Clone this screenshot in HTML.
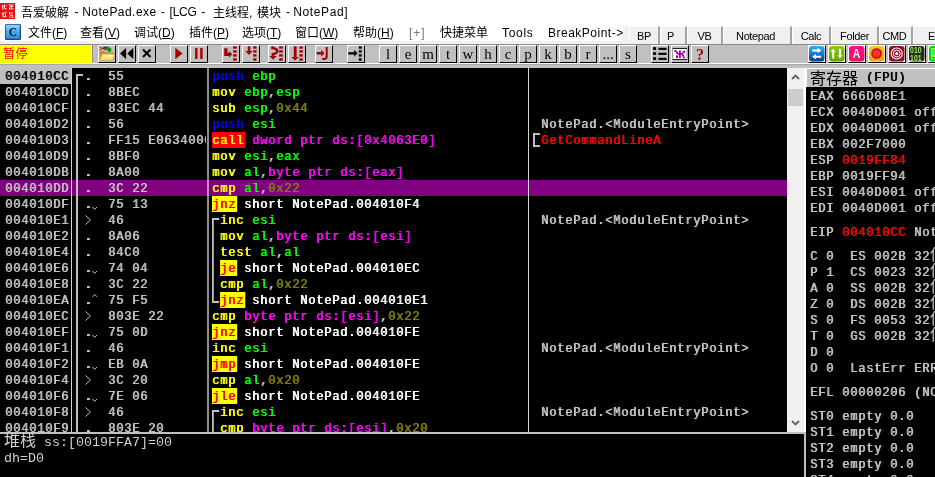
<!DOCTYPE html>
<html lang="zh-CN">
<head>
<meta charset="utf-8">
<title>吾爱破解 - NotePad.exe</title>
<style>
html,body{margin:0;padding:0}
body{width:935px;height:477px;overflow:hidden;background:#fff;position:relative;
 font-family:"Liberation Sans","Noto Sans CJK SC",sans-serif;font-size:12px;color:#000}
div,span,i,b,u{box-sizing:border-box}
i,b,u{font-style:normal;font-weight:inherit;text-decoration:none}
.abs{position:absolute}
#wrap{position:absolute;left:0;top:0;width:935px;height:477px;will-change:transform}
/* title */
#title{position:absolute;left:0;top:0;width:935px;height:22px;background:#fff}
#title span{position:absolute;top:4px;height:17px;line-height:17px;font-size:12px;white-space:pre}
#ticon{position:absolute;left:0;top:3px;width:15px;height:16px}
/* menu */
#menu{position:absolute;left:0;top:22px;width:935px;height:22px;background:#fff}
#menu span{position:absolute;top:3px;height:17px;line-height:17px;font-size:12px;white-space:nowrap}
#menu span u{text-decoration:underline}
#menu .gr{color:#777}
#micon{position:absolute;left:5px;top:2px;width:16px;height:16px}
.tb{position:absolute;top:4px;height:19px;background:#f0f0f0;border-left:1px solid #fff;border-top:1px solid #fff;border-right:2px solid #a4a4a4;border-bottom:1px solid #b8b8b8;
 font-size:11px;line-height:19px;text-align:center;white-space:nowrap;overflow:hidden;letter-spacing:-.4px}
/* toolbar */
#tool{position:absolute;left:0;top:44px;width:935px;height:24px;background:#c0c0c0}
#tool .hl{position:absolute;left:0;top:0;width:935px;height:1px;background:#8a8a8a}
#tool .wl{position:absolute;left:0;top:19px;width:935px;height:1px;background:#fff}
#tool .gl{position:absolute;left:0;top:20px;width:935px;height:1px;background:#a8a8a8}
#tool .sv{position:absolute;left:91px;top:1px;width:1px;height:18px;background:#fff}
#tool .sd{position:absolute;left:92px;top:1px;width:1px;height:18px;background:#909090}
#mstrip{position:absolute;left:0;top:19px;width:935px;height:3px;background:#f0f0f0}
#st{position:absolute;left:0;top:1px;width:91px;height:18px;background:#ffff00;color:#ff0000;font-size:12px;line-height:21px;padding-left:3px;letter-spacing:.6px;overflow:hidden;
 font-family:"Liberation Mono","Noto Sans CJK SC",monospace}
.bt{position:absolute;top:1px;width:18px;height:18px;background:#c0c0c0;border-left:1px solid #fff;border-top:1px solid #fff;border-right:1px solid #000;border-bottom:1px solid #000;
 font-family:"Liberation Serif",serif;font-size:15px;line-height:16px;text-align:center;color:#000}
.bt svg{position:absolute;left:0;top:0;width:16px;height:16px}
.ic{position:absolute;top:1px;width:18px;height:18px;background:#fff;border-left:1px solid #fff;border-top:1px solid #fff;border-right:1px solid #000;border-bottom:1px solid #000}
.ic svg{position:absolute;left:0;top:0;width:16px;height:16px}
/* cpu pane */
#cpu{position:absolute;left:0;top:68px;width:787px;height:364px;background:#000;overflow:hidden;
 font-family:"Liberation Mono",monospace;font-weight:normal;text-shadow:.85px 0 0 currentColor;font-size:13.33px;color:#c0c0c0}
.row{position:absolute;left:0;width:787px;height:16px;line-height:16px;white-space:pre}
.row.sel{background:#800080}
.row span{position:absolute;top:0;height:16px;line-height:18px;white-space:pre;overflow:hidden;transform:scaleX(0.9);transform-origin:0 0;letter-spacing:0.889px}
.ad{left:0;width:78.89px;padding-left:5.50px}
.ad.cur{background:#c0c0c0;color:#000}
.mk{left:84px;width:9px;transform:scaleX(1.300) !important;transform-origin:4.400px 0 !important;letter-spacing:0 !important}
.hx{left:108.200px;width:109.11px}
.ds{left:212px;width:351.11px;color:#fff}
.cm{left:541.300px;width:272.22px}
.jv,.ju{position:absolute;left:91px;top:0;width:8px;height:16px}
.gt{position:absolute;left:84px;top:0;width:8px;height:16px}
.l1,.l2,.l3{display:inline-block;position:relative;width:8.889px;height:16px;vertical-align:top;letter-spacing:0}
.l1:before{content:"";position:absolute;left:0;top:6px;width:2.200px;height:10px;background:#c0c0c0}
.l1:after{content:"";position:absolute;left:0;top:6px;width:7.800px;height:2px;background:#c0c0c0}
.l2:before{content:"";position:absolute;left:0;top:0;width:2.200px;height:16px;background:#c0c0c0}
.l3:before{content:"";position:absolute;left:0;top:0;width:2.200px;height:11px;background:#c0c0c0}
.l3:after{content:"";position:absolute;left:0;top:9px;width:7.800px;height:2px;background:#c0c0c0}
.cb{position:absolute;left:533px;top:1px;width:7px;height:14px;border:2px solid #c0c0c0;border-right:none}
b.b{color:#0000ff} b.y{color:#ffff00} b.g{color:#00ff00} b.o{color:#808000} b.m{color:#ff00ff} b.w{color:#c0c0c0} b.W{color:#fff}
b.r,.r{color:#ff0000}
b.call{color:#ffff00;background:#ff0000}
b.j{color:#ff0000;background:#ffff00}
b.call,b.j{display:inline-block;height:16px;line-height:18px;vertical-align:top;padding-right:1px;margin-right:-1px}
.vl{position:absolute;top:0;height:364px;background:#c0c0c0}
/* scrollbar */
#sb{position:absolute;left:787px;top:68px;width:17px;height:364px;background:#f0f0f0}
#sb .th{position:absolute;left:1px;top:21px;width:15px;height:17px;background:#cdcdcd}
#sb svg{position:absolute;left:4px;width:9px;height:6px}
/* info */
#info{position:absolute;left:0;top:432px;width:806px;height:45px;background:#000;border-top:2px solid #c0c0c0;border-right:2px solid #c0c0c0;
 font-family:"Liberation Mono","Noto Sans CJK SC",monospace;font-size:13.33px;color:#d0d0d0}
#info div{position:absolute;left:4px;height:16px;line-height:16px;white-space:pre}
#info .cj{font-size:16px;letter-spacing:0}
/* regs */
#reg{position:absolute;left:806px;top:68px;width:129px;height:409px;background:#000;overflow:hidden;
 font-family:"Liberation Mono","Noto Sans CJK SC",monospace;font-weight:normal;text-shadow:.85px 0 0 currentColor;font-size:13.33px;color:#c0c0c0}
#reg .hd{position:absolute;left:0;top:0;width:129px;height:19px;background:#c0c0c0;color:#000;line-height:22px;padding-left:3px;white-space:pre;border-left:1px solid #fff;border-top:1px solid #fff;overflow:hidden}
#reg .hd .cj{font-size:16px;font-weight:normal;text-shadow:none}
#reg .hd span{position:absolute;top:0;white-space:pre}
#reg .hd .hc{left:3px;line-height:22px}
#reg .hd .hf{left:59.300px;line-height:18px;transform:scaleX(0.9);transform-origin:0 0;letter-spacing:0.889px}
.rg{position:absolute;left:4.300px;width:138.89px;height:18px;line-height:20px;white-space:pre;overflow:hidden;transform:scaleX(0.9);transform-origin:0 0;letter-spacing:0.889px}
.rg .cj{text-shadow:none;font-weight:normal;font-size:16px;position:absolute;left:133.00px;top:-1px;line-height:20px;letter-spacing:0;transform:scaleX(1.1111);transform-origin:0 0}
</style>
</head>
<body>
<div id="wrap">
<div id="title">
<svg id="ticon" viewBox="0 0 15 16"><rect width="15" height="16" fill="#e61212"/><g fill="#ffd8d8"><rect x="2" y="2" width="1" height="3"/><rect x="3" y="3" width="2" height="1"/><rect x="4" y="1.500" width="1" height="4"/><rect x="5.500" y="2" width="1" height="1"/><rect x="2" y="5.500" width="2" height="1"/><rect x="5" y="5" width="1.500" height="1.500"/><rect x="8.500" y="1.500" width="5" height="1"/><rect x="10" y="3" width="3" height="1"/><rect x="11" y="2.500" width="1" height="4"/><rect x="9" y="4.500" width="1.500" height="2"/><rect x="12.500" y="5" width="1" height="1.500"/><rect x="2.500" y="9" width="1" height="5.500"/><rect x="1.500" y="10.500" width="3" height="1"/><rect x="4.500" y="9" width="2" height="1"/><rect x="5" y="10.500" width="1" height="4"/><rect x="3.500" y="13" width="3" height="1"/><rect x="9" y="9" width="1" height="2"/><rect x="10.500" y="9.500" width="2.500" height="1"/><rect x="9.500" y="11.500" width="2" height="1"/><rect x="11" y="12" width="2" height="1"/><rect x="9" y="13.500" width="1.500" height="1"/><rect x="11.500" y="13.500" width="2" height="1.500"/></g></svg>
<span style="left:21px;top:5px">吾爱破解</span><span style="left:74.500px">-</span><span style="left:82.200px;letter-spacing:.46px">NotePad.exe</span><span style="left:161px">-</span><span style="left:169.500px;letter-spacing:-.2px">[LCG</span><span style="left:201.300px">-</span><span style="left:213px;top:5px">主线程,</span><span style="left:257px;top:5px">模块</span><span style="left:286px">-</span><span style="left:293.300px;letter-spacing:.6px">NotePad]</span>
</div>
<div id="menu">
<div id="mstrip"></div>
<svg id="micon" viewBox="0 0 16 16"><defs><linearGradient id="mg" x1="0" y1="0" x2="0" y2="1"><stop offset="0" stop-color="#9ad8f8"/><stop offset=".5" stop-color="#4aa8e8"/><stop offset="1" stop-color="#2a8cdc"/></linearGradient></defs><rect x="0" y="0" width="16" height="16" rx="1.500" fill="#0c4a8a"/><rect x=".8" y=".8" width="14" height="14" rx="1" fill="url(#mg)"/><text x="7.800" y="11.800" font-family="Liberation Serif,serif" font-weight="bold" font-size="11.500" text-anchor="middle" fill="#0a1a30">C</text></svg>
<span style="left:28px">文件(<u>F</u>)</span>
<span style="left:80px">查看(<u>V</u>)</span>
<span style="left:134px">调试(<u>D</u>)</span>
<span style="left:189px">插件(<u>P</u>)</span>
<span style="left:242px">选项(<u>T</u>)</span>
<span style="left:295px">窗口(<u>W</u>)</span>
<span style="left:353px">帮助(<u>H</u>)</span>
<span style="left:409px;letter-spacing:.9px" class="gr">[+]</span>
<span style="left:440px">快捷菜单</span>
<span style="left:502px;letter-spacing:.7px">Tools</span>
<span style="left:548px;letter-spacing:.5px">BreakPoint-&gt;</span>
<div class="abs" style="left:623px;top:4px;width:312px;height:18px;background:#f0f0f0"></div>
<div class="tb" style="left:629px;width:31px">BP</div>
<div class="tb" style="left:660px;width:27px;padding-right:5px">P</div>
<div class="tb" style="left:687px;width:36px">VB</div>
<div class="tb" style="left:723px;width:69px;padding-right:3px">Notepad</div>
<div class="tb" style="left:792px;width:39px">Calc</div>
<div class="tb" style="left:831px;width:48px">Folder</div>
<div class="tb" style="left:879px;width:34px;padding-right:2px">CMD</div>
<div class="tb" style="left:913px;width:60px;text-align:left;padding-left:14px">ESP</div>
</div>
<div id="tool">
<div class="hl"></div><div class="wl"></div><div class="gl"></div><div class="sv"></div><div class="sd"></div>
<div id="st">暂停</div>
<div class="bt" style="left:98px"><svg viewBox="0 0 16 16"><path d="M0.500 5h5l1 1.500h8.500v7.500h-14.500z" fill="#c89020"/><path d="M3 8h12.800l-1.800 6.300h-13.500z" fill="#ffe070" stroke="#d0a030" stroke-width=".8"/><path d="M4 8.800h10.500l-.5 2h-10.500z" fill="#fff4b0"/><path d="M3.500 1c2.500-1.500 7-1 8.700 1.800v3h-3.200l-.8-1.800h-3.500z" fill="#109018"/><rect x="5.500" y="1.200" width="1" height="1" fill="#000"/><path d="M0.300 0.800l3 1.700l-3 1.700M3 2.500h2.500" stroke="#f00000" stroke-width="1" fill="none"/></svg></div>
<div class="bt" style="left:118px"><svg viewBox="0 0 16 16"><path d="M7.100 2v11L1 7.500zM14.300 2v11L8.300 7.500z" fill="#000"/></svg></div>
<div class="bt" style="left:138px"><svg viewBox="0 0 16 16"><path d="M4 3.500l7.500 7.500M11.500 3.500l-7.500 7.500" stroke="#000" stroke-width="2"/></svg></div>
<div class="bt" style="left:170px"><svg viewBox="0 0 16 16"><path d="M4.300 1.800v11.500l7.200-5.750z" fill="#a80000"/></svg></div>
<div class="bt" style="left:190px"><svg viewBox="0 0 16 16"><rect x="4.100" y="2" width="2.400" height="11" fill="#a80000"/><rect x="9.200" y="2" width="2.400" height="11" fill="#a80000"/></svg></div>
<div class="bt" style="left:222px"><svg viewBox="0 0 16 16"><path d="M1.200 2.200h3.300v4.600h1.500v-1.800l3.200 3.300l-3.200 3.400v-1.800h-4.800z" fill="#a80000"/><rect x="10.1" y="0.3" width="3.6" height="2.400" fill="#a80000"/><rect x="10.1" y="4.2" width="3.6" height="2.400" fill="#a80000"/><rect x="10.1" y="8.2" width="3.6" height="2.400" fill="#a80000"/><rect x="10.1" y="12.3" width="3.6" height="2.400" fill="#a80000"/></svg></div>
<div class="bt" style="left:242px"><svg viewBox="0 0 16 16"><path d="M4.800 0.200h2.500v4.800h2.300l-3.600 3.900l-3.700-3.900h2.500z" fill="#a80000"/><rect x="10.2" y="0.3" width="3.3" height="2.400" fill="#a80000"/><rect x="10.2" y="4.2" width="3.3" height="2.400" fill="#a80000"/><rect x="10.2" y="8.2" width="3.3" height="2.400" fill="#a80000"/><rect x="10.2" y="12.3" width="3.3" height="2.400" fill="#a80000"/></svg></div>
<div class="bt" style="left:268px"><svg viewBox="0 0 16 16"><path d="M3.500 0.300v1.700q4.800 0.800 4.800 3.200q0 2-4.500 3v2" stroke="#a80000" stroke-width="2.500" fill="none"/><path d="M0.400 9.900h7.400l-3.700 3.900z" fill="#a80000"/><rect x="10.1" y="0.3" width="3.7" height="2.400" fill="#a80000"/><rect x="10.1" y="4.2" width="3.7" height="2.400" fill="#a80000"/><rect x="10.1" y="8.2" width="3.7" height="2.400" fill="#a80000"/><rect x="10.1" y="12.3" width="3.7" height="2.400" fill="#a80000"/></svg></div>
<div class="bt" style="left:288px"><svg viewBox="0 0 16 16"><path d="M4.800 0.200h2.800v10.700h2.300l-3.800 3.700l-3.900-3.700h2.600z" fill="#a80000"/><rect x="10.4" y="0.3" width="3.4" height="2.400" fill="#a80000"/><rect x="10.4" y="4.2" width="3.4" height="2.400" fill="#a80000"/><rect x="10.4" y="8.2" width="3.4" height="2.400" fill="#a80000"/><rect x="10.4" y="12.3" width="3.4" height="2.400" fill="#a80000"/></svg></div>
<div class="bt" style="left:315px"><svg viewBox="0 0 16 16"><path d="M0.700 5.900h4.500v-2.200l3.300 3.500l-3.300 3.600v-2.300h-4.500z" fill="#a80000"/><path d="M10.700 1.100v9.500q0 2.400-2.500 2.400h-2" stroke="#a80000" stroke-width="2" fill="none"/></svg></div>
<div class="bt" style="left:347px"><svg viewBox="0 0 16 16"><path d="M0.200 6.200h6v-2.500l3.400 3.600l-3.400 3.500v-2.400h-6z" fill="#000"/><rect x="10.8" y="0.3" width="2.9" height="2.400" fill="#000"/><rect x="10.8" y="4.2" width="2.9" height="2.400" fill="#000"/><rect x="10.8" y="8.2" width="2.9" height="2.400" fill="#000"/><rect x="10.8" y="12.3" width="2.9" height="2.400" fill="#000"/></svg></div>
<div class="bt" style="left:379px">l</div>
<div class="bt" style="left:399px">e</div>
<div class="bt" style="left:419px">m</div>
<div class="bt" style="left:439px">t</div>
<div class="bt" style="left:459px">w</div>
<div class="bt" style="left:479px">h</div>
<div class="bt" style="left:499px">c</div>
<div class="bt" style="left:519px">p</div>
<div class="bt" style="left:539px">k</div>
<div class="bt" style="left:559px">b</div>
<div class="bt" style="left:579px">r</div>
<div class="bt" style="left:599px">...</div>
<div class="bt" style="left:619px">s</div>
<div class="bt" style="left:651px"><svg viewBox="0 0 16 16"><g fill="#000"><rect x="1.100" y="1.200" width="3" height="2.700"/><rect x="6.400" y="1.800" width="8.200" height="2.100"/><rect x="1.100" y="6.200" width="3" height="2.700"/><rect x="6.400" y="6.800" width="8.200" height="2.100"/><rect x="1.100" y="11.200" width="3" height="2.700"/><rect x="6.400" y="11.800" width="8.200" height="2.100"/></g></svg></div>
<div class="bt" style="left:671px"><svg viewBox="0 0 16 16"><rect x=".7" y="2.300" width="14.300" height="11.400" fill="#fff" stroke="#909090" stroke-width=".8"/><rect x=".7" y="2" width="14.300" height="1" fill="#202020"/><rect x=".7" y="13" width="14.300" height="1" fill="#202020"/><g fill="#a000a0"><rect x="2.500" y="4" width="2" height="2"/><rect x="4" y="5.500" width="2" height="2"/><rect x="5.500" y="7" width="6" height="1.800"/><rect x="7" y="4.500" width="1.800" height="7.500"/><rect x="10.500" y="5" width="2.500" height="1.800"/><rect x="4" y="9.500" width="2" height="2.500"/><rect x="10" y="9" width="2" height="1.500"/><rect x="11" y="10.500" width="2" height="1.800"/></g></svg></div>
<div class="bt" style="left:691px;font-family:'Liberation Serif',serif;font-weight:bold;color:#b00000;font-size:16px;line-height:17px">?</div>
<div class="ic" style="left:808px"><svg viewBox="0 0 16 16"><defs><linearGradient id="g1" x1="0" y1="0" x2="0" y2="1"><stop offset="0" stop-color="#28b4f4"/><stop offset=".5" stop-color="#1878d0"/><stop offset="1" stop-color="#0a3c8c"/></linearGradient></defs><rect x="0" y="0" width="15.500" height="15.500" rx="3" fill="url(#g1)"/><path d="M3.200 3.400h5.300v-1.600l3.900 2.600l-3.900 2.600v-1.500h-5.300zM12.200 9.700h-5.300v-1.600l-3.900 2.600l3.900 2.600v-1.500h5.300z" fill="#fff"/></svg></div>
<div class="ic" style="left:828px"><svg viewBox="0 0 16 16"><defs><linearGradient id="g2" x1="0" y1="0" x2="0" y2="1"><stop offset="0" stop-color="#8cc810"/><stop offset="1" stop-color="#5ea800"/></linearGradient></defs><rect x="0" y="0" width="15.500" height="15.500" rx="3" fill="url(#g2)"/><path d="M4.200 2.600l2.500 3.400h-1.500v6.400h-2v-6.400h-1.500zM11 12.600l-2.600-3.400h1.600v-6.400h2v6.400h1.600z" fill="#fff"/></svg></div>
<div class="ic" style="left:848px"><svg viewBox="0 0 16 16"><defs><linearGradient id="g3" x1="0" y1="0" x2="0" y2="1"><stop offset="0" stop-color="#ff1088"/><stop offset="1" stop-color="#f01060"/></linearGradient></defs><rect x="0" y="0" width="15.500" height="15.500" rx="3" fill="url(#g3)"/><text x="7.400" y="12.300" font-family="Liberation Sans,sans-serif" font-weight="bold" font-size="12.500" text-anchor="middle" fill="#fff" transform="translate(7.400 0) scale(.82 1) translate(-7.400 0)">A</text></svg></div>
<div class="ic" style="left:868px"><svg viewBox="0 0 16 16"><defs><linearGradient id="g4" x1="0" y1="0" x2="0" y2="1"><stop offset="0" stop-color="#f8c828"/><stop offset="1" stop-color="#f0a010"/></linearGradient></defs><rect x="0" y="0" width="15.500" height="15.500" rx="3" fill="url(#g4)"/><circle cx="7.600" cy="7.500" r="5.600" fill="#d04020"/><circle cx="7.600" cy="7.500" r="4.800" fill="#b01818"/><circle cx="7.600" cy="7.500" r="3.600" fill="#ff3030"/></svg></div>
<div class="ic" style="left:888px"><svg viewBox="0 0 16 16"><rect x="0" y="0" width="15.500" height="15.500" rx="3" fill="#941028"/><circle cx="7.700" cy="7.500" r="5.500" fill="none" stroke="#fff" stroke-width="1.100"/><circle cx="7.700" cy="7.500" r="3.400" fill="none" stroke="#fff" stroke-width="1"/><circle cx="7.700" cy="7.500" r="1.500" fill="#fff"/></svg></div>
<div class="ic" style="left:908px"><svg viewBox="0 0 16 16"><rect x="0" y="0" width="15.500" height="15.500" rx="3" fill="#2a2a2c"/><g transform="scale(.8 1)"><text x="1.400" y="7" font-family="Liberation Sans,sans-serif" font-weight="bold" font-size="8.600" fill="#98e848">010</text><text x="1.400" y="15" font-family="Liberation Sans,sans-serif" font-weight="bold" font-size="8.600" fill="#98e848">101</text></g></svg></div>
<div class="ic" style="left:928px"><svg viewBox="0 0 16 16"><rect x="0" y="0" width="15.500" height="15.500" rx="3" fill="#08d008"/><rect x="2.500" y="2.500" width="11" height="7" fill="#40f040" stroke="#a0ff40" stroke-width="1"/><rect x="2.500" y="10.500" width="11" height="2.500" fill="none" stroke="#a0ff40" stroke-width="1"/></svg></div>
</div>
<div id="cpu">
<div class="row" style="top:0px">
<span class="ad cur">004010CC</span>
<span class="mk">.</span>
<span class="hx">55</span>
<span class="ds"><b class="b">push</b> <b class="g">ebp</b></span>
</div>
<div class="row" style="top:16px">
<span class="ad">004010CD</span>
<span class="mk">.</span>
<span class="hx">8BEC</span>
<span class="ds"><b class="y">mov</b> <b class="g">ebp</b><b class="w">,</b><b class="g">esp</b></span>
</div>
<div class="row" style="top:32px">
<span class="ad">004010CF</span>
<span class="mk">.</span>
<span class="hx">83EC 44</span>
<span class="ds"><b class="y">sub</b> <b class="g">esp</b><b class="w">,</b><b class="o">0x44</b></span>
</div>
<div class="row" style="top:48px">
<span class="ad">004010D2</span>
<span class="mk">.</span>
<span class="hx">56</span>
<span class="ds"><b class="b">push</b> <b class="g">esi</b></span>
<span class="cm">NotePad.&lt;ModuleEntryPoint&gt;</span>
</div>
<div class="row" style="top:64px">
<span class="ad">004010D3</span>
<span class="mk">.</span>
<span class="hx">FF15 E0634000</span>
<span class="ds"><b class="call">call</b> <b class="m">dword ptr ds:[0x4063E0]</b></span>
<i class="cb"></i><span class="cm r">GetCommandLineA</span>
</div>
<div class="row" style="top:80px">
<span class="ad">004010D9</span>
<span class="mk">.</span>
<span class="hx">8BF0</span>
<span class="ds"><b class="y">mov</b> <b class="g">esi</b><b class="w">,</b><b class="g">eax</b></span>
</div>
<div class="row" style="top:96px">
<span class="ad">004010DB</span>
<span class="mk">.</span>
<span class="hx">8A00</span>
<span class="ds"><b class="y">mov</b> <b class="g">al</b><b class="w">,</b><b class="m">byte ptr ds:[eax]</b></span>
</div>
<div class="row sel" style="top:112px">
<span class="ad">004010DD</span>
<span class="mk">.</span>
<span class="hx">3C 22</span>
<span class="ds"><b class="y">cmp</b> <b class="g">al</b><b class="w">,</b><b class="o">0x22</b></span>
</div>
<div class="row" style="top:128px">
<span class="ad">004010DF</span>
<span class="mk">.</span>
<svg class="jv" viewBox="0 0 8 16"><path d="M1.500 11L3.700 13.300L6 11" stroke="#c0c0c0" stroke-width="1" fill="none"/></svg>
<span class="hx">75 13</span>
<span class="ds"><b class="j">jnz</b> <b class="W">short NotePad.004010F4</b></span>
</div>
<div class="row" style="top:144px">
<span class="ad">004010E1</span>
<svg class="gt" viewBox="0 0 8 16"><path d="M1.500 3.500L6.500 8L1.500 12.500" stroke="#c0c0c0" stroke-width="1" fill="none"/></svg>
<span class="hx">46</span>
<span class="ds"><i class="l1"></i><b class="y">inc</b> <b class="g">esi</b></span>
<span class="cm">NotePad.&lt;ModuleEntryPoint&gt;</span>
</div>
<div class="row" style="top:160px">
<span class="ad">004010E2</span>
<span class="mk">.</span>
<span class="hx">8A06</span>
<span class="ds"><i class="l2"></i><b class="y">mov</b> <b class="g">al</b><b class="w">,</b><b class="m">byte ptr ds:[esi]</b></span>
</div>
<div class="row" style="top:176px">
<span class="ad">004010E4</span>
<span class="mk">.</span>
<span class="hx">84C0</span>
<span class="ds"><i class="l2"></i><b class="y">test</b> <b class="g">al</b><b class="w">,</b><b class="g">al</b></span>
</div>
<div class="row" style="top:192px">
<span class="ad">004010E6</span>
<span class="mk">.</span>
<svg class="jv" viewBox="0 0 8 16"><path d="M1.500 11L3.700 13.300L6 11" stroke="#c0c0c0" stroke-width="1" fill="none"/></svg>
<span class="hx">74 04</span>
<span class="ds"><i class="l2"></i><b class="j">je</b> <b class="W">short NotePad.004010EC</b></span>
</div>
<div class="row" style="top:208px">
<span class="ad">004010E8</span>
<span class="mk">.</span>
<span class="hx">3C 22</span>
<span class="ds"><i class="l2"></i><b class="y">cmp</b> <b class="g">al</b><b class="w">,</b><b class="o">0x22</b></span>
</div>
<div class="row" style="top:224px">
<span class="ad">004010EA</span>
<span class="mk">.</span>
<svg class="ju" viewBox="0 0 8 16"><path d="M1.500 4.800L3.700 2.400L6 4.800" stroke="#c0c0c0" stroke-width="1" fill="none"/></svg>
<span class="hx">75 F5</span>
<span class="ds"><i class="l3"></i><b class="j">jnz</b> <b class="W">short NotePad.004010E1</b></span>
</div>
<div class="row" style="top:240px">
<span class="ad">004010EC</span>
<svg class="gt" viewBox="0 0 8 16"><path d="M1.500 3.500L6.500 8L1.500 12.500" stroke="#c0c0c0" stroke-width="1" fill="none"/></svg>
<span class="hx">803E 22</span>
<span class="ds"><b class="y">cmp</b> <b class="m">byte ptr ds:[esi]</b><b class="w">,</b><b class="o">0x22</b></span>
</div>
<div class="row" style="top:256px">
<span class="ad">004010EF</span>
<span class="mk">.</span>
<svg class="jv" viewBox="0 0 8 16"><path d="M1.500 11L3.700 13.300L6 11" stroke="#c0c0c0" stroke-width="1" fill="none"/></svg>
<span class="hx">75 0D</span>
<span class="ds"><b class="j">jnz</b> <b class="W">short NotePad.004010FE</b></span>
</div>
<div class="row" style="top:272px">
<span class="ad">004010F1</span>
<span class="mk">.</span>
<span class="hx">46</span>
<span class="ds"><b class="y">inc</b> <b class="g">esi</b></span>
<span class="cm">NotePad.&lt;ModuleEntryPoint&gt;</span>
</div>
<div class="row" style="top:288px">
<span class="ad">004010F2</span>
<span class="mk">.</span>
<svg class="jv" viewBox="0 0 8 16"><path d="M1.500 11L3.700 13.300L6 11" stroke="#c0c0c0" stroke-width="1" fill="none"/></svg>
<span class="hx">EB 0A</span>
<span class="ds"><b class="j">jmp</b> <b class="W">short NotePad.004010FE</b></span>
</div>
<div class="row" style="top:304px">
<span class="ad">004010F4</span>
<svg class="gt" viewBox="0 0 8 16"><path d="M1.500 3.500L6.500 8L1.500 12.500" stroke="#c0c0c0" stroke-width="1" fill="none"/></svg>
<span class="hx">3C 20</span>
<span class="ds"><b class="y">cmp</b> <b class="g">al</b><b class="w">,</b><b class="o">0x20</b></span>
</div>
<div class="row" style="top:320px">
<span class="ad">004010F6</span>
<span class="mk">.</span>
<svg class="jv" viewBox="0 0 8 16"><path d="M1.500 11L3.700 13.300L6 11" stroke="#c0c0c0" stroke-width="1" fill="none"/></svg>
<span class="hx">7E 06</span>
<span class="ds"><b class="j">jle</b> <b class="W">short NotePad.004010FE</b></span>
</div>
<div class="row" style="top:336px">
<span class="ad">004010F8</span>
<svg class="gt" viewBox="0 0 8 16"><path d="M1.500 3.500L6.500 8L1.500 12.500" stroke="#c0c0c0" stroke-width="1" fill="none"/></svg>
<span class="hx">46</span>
<span class="ds"><i class="l1"></i><b class="y">inc</b> <b class="g">esi</b></span>
<span class="cm">NotePad.&lt;ModuleEntryPoint&gt;</span>
</div>
<div class="row" style="top:352px">
<span class="ad">004010F9</span>
<span class="mk">.</span>
<span class="hx">803E 20</span>
<span class="ds"><i class="l2"></i><b class="y">cmp</b> <b class="m">byte ptr ds:[esi]</b><b class="w">,</b><b class="o">0x20</b></span>
</div>
<div class="vl" style="left:71px;width:1px;background:#d4d4d4"></div>
<div class="vl" style="left:76px;width:2px;top:6px"></div>
<div class="vl" style="left:76px;width:7px;top:6px;height:2px"></div>
<div class="vl" style="left:207px;width:2px;background:rgba(255,255,255,.55)"></div>
<div class="vl" style="left:528px;width:1px;background:#d4d4d4"></div>
</div>
<div id="sb"><svg style="top:6px" viewBox="0 0 9 6"><path d="M1 5l3.500-3.500L8 5" stroke="#606060" stroke-width="1.800" fill="none"/></svg><div class="th"></div><svg style="top:352px" viewBox="0 0 9 6"><path d="M1 1l3.500 3.500L8 1" stroke="#606060" stroke-width="1.800" fill="none"/></svg></div>
<div id="info">
<div style="top:0"><u class="cj">堆栈</u> ss:[0019FFA7]=00</div>
<div style="top:17px">dh=D0</div>
</div>
<div id="reg">
<div class="hd"><span class="hc"><u class="cj">寄存器</u></span><span class="hf">(FPU)</span></div>
<div class="rg" style="top:19px">EAX 666D08E1</div>
<div class="rg" style="top:35px">ECX 0040D001 offset NotePad.&lt;ModuleEntryPoint&gt;</div>
<div class="rg" style="top:51px">EDX 0040D001 offset NotePad.&lt;ModuleEntryPoint&gt;</div>
<div class="rg" style="top:67px">EBX 002F7000</div>
<div class="rg" style="top:83px">ESP <b class="r">0019FF84</b></div>
<div class="rg" style="top:99px">EBP 0019FF94</div>
<div class="rg" style="top:115px">ESI 0040D001 offset NotePad.&lt;ModuleEntryPoint&gt;</div>
<div class="rg" style="top:131px">EDI 0040D001 offset NotePad.&lt;ModuleEntryPoint&gt;</div>
<div class="rg" style="top:155px">EIP <b class="r">004010CC</b> NotePad.&lt;ModuleEntryPoint&gt;</div>
<div class="rg" style="top:179px">C 0  ES 002B 32<u class="cj">位</u></div>
<div class="rg" style="top:195px">P 1  CS 0023 32<u class="cj">位</u></div>
<div class="rg" style="top:211px">A 0  SS 002B 32<u class="cj">位</u></div>
<div class="rg" style="top:227px">Z 0  DS 002B 32<u class="cj">位</u></div>
<div class="rg" style="top:243px">S 0  FS 0053 32<u class="cj">位</u></div>
<div class="rg" style="top:259px">T 0  GS 002B 32<u class="cj">位</u></div>
<div class="rg" style="top:275px">D 0</div>
<div class="rg" style="top:291px">O 0  LastErr ERROR_SUCCESS (00000000)</div>
<div class="rg" style="top:315px">EFL 00000206 (NO,NB,NE,A,NS,PE,GE,G)</div>
<div class="rg" style="top:339px">ST0 empty 0.0</div>
<div class="rg" style="top:355px">ST1 empty 0.0</div>
<div class="rg" style="top:371px">ST2 empty 0.0</div>
<div class="rg" style="top:387px">ST3 empty 0.0</div>
<div class="rg" style="top:403px">ST4 empty 0.0</div>
</div>
</div>
</body>
</html>
